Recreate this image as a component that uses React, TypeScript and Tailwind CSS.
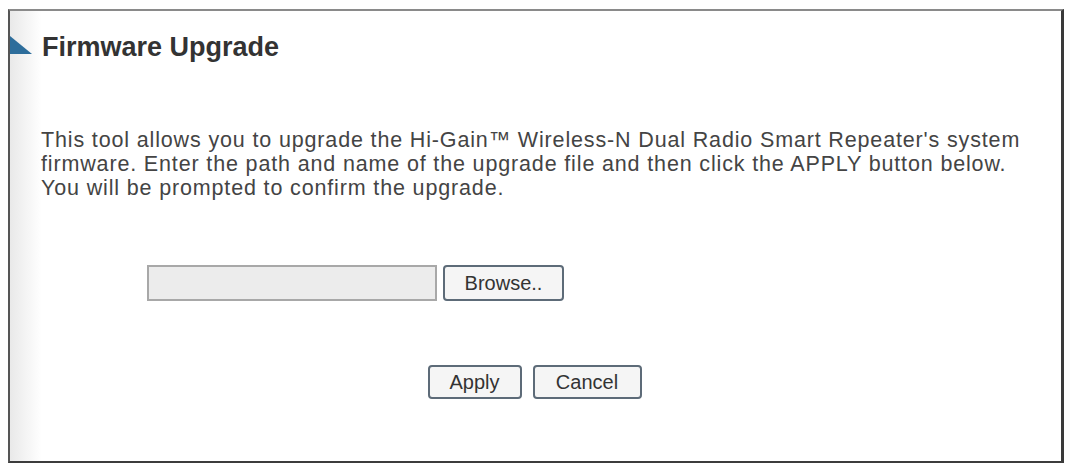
export default function App() {
  return (
    <div className="h-[465px] w-[1065px] bg-white pl-[8px] pt-[9px] font-['Liberation_Sans',Arial,sans-serif]">
      <div className="flex h-[454px] w-[1056px] flex-col border-y-2 border-l-2 border-r-[3px] border-t-[#8a8a8a] border-b-[#3c3c3c] border-l-[#555] border-r-[#3a3a3a] bg-gradient-to-r from-[#e9e9e9] via-white via-[3%] to-white">
        <div className="mt-[21px] flex items-end">
          <svg width="22" height="18" viewBox="0 0 22 18" className="mb-[8px] shrink-0">
            <polygon points="0,0 0,18 22,18" fill="#2d6d9b" />
          </svg>
          <h1 className="ml-[10px] text-[27px] font-bold leading-[30px] text-[#333]">Firmware Upgrade</h1>
        </div>

        <p className="ml-[31px] mt-[66px] text-[21.5px] leading-[24px] tracking-[0.85px] text-[#444]">
          This tool allows you to upgrade the Hi-Gain™ Wireless-N Dual Radio Smart Repeater's system
          <br />
          firmware. Enter the path and name of the upgrade file and then click the APPLY button below.
          <br />
          You will be prompted to confirm the upgrade.
        </p>

        <div className="ml-[137px] mt-[65px] flex items-center gap-[6px]">
          <div className="h-[36px] w-[290px] border-2 border-[#a8a8a8] bg-[#ececec]" />
          <button className="h-[36px] w-[121px] rounded-[4px] border-2 border-[#5d6b78] bg-[#f5f5f5] text-[20px] text-[#333]">
            Browse..
          </button>
        </div>

        <div className="mt-[64px] flex justify-center gap-[11px] pr-[2px]">
          <button className="h-[34px] w-[94px] rounded-[4px] border-2 border-[#5d6b78] bg-[#f5f5f5] text-[20px] text-[#333]">
            Apply
          </button>
          <button className="h-[34px] w-[109px] rounded-[4px] border-2 border-[#5d6b78] bg-[#f5f5f5] text-[20px] text-[#333]">
            Cancel
          </button>
        </div>
      </div>
    </div>
  );
}
